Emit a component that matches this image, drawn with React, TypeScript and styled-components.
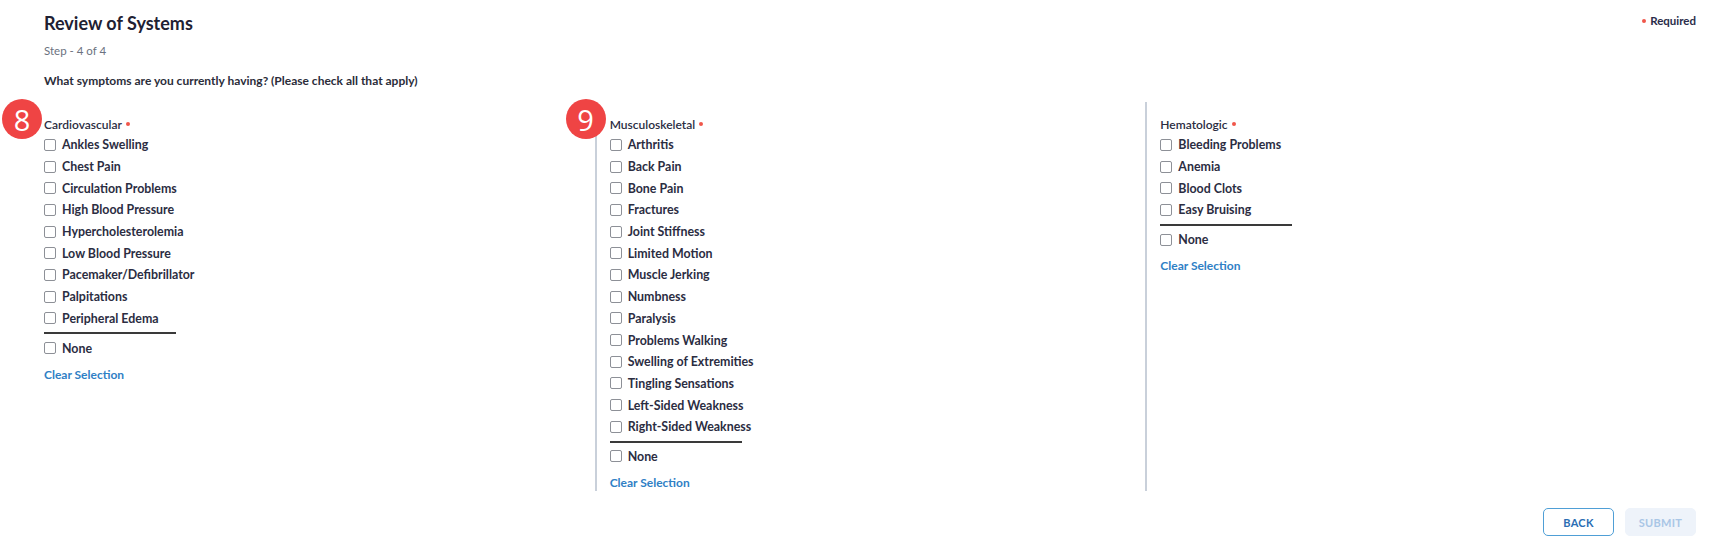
import styled, { createGlobalStyle } from 'styled-components'

const GlobalStyle = createGlobalStyle`
  body {
    margin: 0;
    background: #ffffff;
    font-family: Lato, "Open Sans", sans-serif;
  }
`

const sections = [
  {
    title: 'Cardiovascular',
    badge: '8',
    items: [
      'Ankles Swelling',
      'Chest Pain',
      'Circulation Problems',
      'High Blood Pressure',
      'Hypercholesterolemia',
      'Low Blood Pressure',
      'Pacemaker/Defibrillator',
      'Palpitations',
      'Peripheral Edema',
    ],
  },
  {
    title: 'Musculoskeletal',
    badge: '9',
    items: [
      'Arthritis',
      'Back Pain',
      'Bone Pain',
      'Fractures',
      'Joint Stiffness',
      'Limited Motion',
      'Muscle Jerking',
      'Numbness',
      'Paralysis',
      'Problems Walking',
      'Swelling of Extremities',
      'Tingling Sensations',
      'Left-Sided Weakness',
      'Right-Sided Weakness',
    ],
  },
  {
    title: 'Hematologic',
    items: ['Bleeding Problems', 'Anemia', 'Blood Clots', 'Easy Bruising'],
  },
]

const Page = styled.div`
  width: 1712px;
  height: 550px;
  box-sizing: border-box;
  padding: 12px 16px 0 44px;
  display: flex;
  flex-direction: column;
  color: #2b2d42;
`

const HeaderRow = styled.div`
  display: flex;
  justify-content: space-between;
  align-items: flex-start;
`

const Title = styled.h1`
  margin: 0;
  font-size: 18px;
  line-height: 22px;
  font-weight: 700;
  color: #1f2133;
`

const Required = styled.div`
  display: flex;
  align-items: center;
  gap: 4px;
  margin-top: 2px;
  font-size: 11.5px;
  font-weight: 700;
  color: #2b2d4a;
`

const Dot = styled.span`
  display: inline-block;
  width: 4px;
  height: 4px;
  border-radius: 50%;
  background: #f0564a;
`

const Step = styled.div`
  margin-top: 9px;
  font-size: 11.5px;
  line-height: 16px;
  color: #6b7280;
`

const Question = styled.div`
  margin-top: 14px;
  font-size: 12px;
  line-height: 16px;
  font-weight: 700;
  color: #2b2d3a;
`

const Columns = styled.div`
  margin-top: 13px;
  display: grid;
  grid-template-columns: repeat(3, 1fr);
  align-items: stretch;
`

const Column = styled.div<{ $divided?: boolean }>`
  position: relative;
  padding: 12px 0 0 ${({ $divided }) => ($divided ? '13px' : '0')};
  border-left: ${({ $divided }) => ($divided ? '2px solid #c9d0da' : 'none')};
  box-sizing: border-box;
`

const Badge = styled.div<{ $left: number }>`
  position: absolute;
  top: -3px;
  left: ${({ $left }) => $left}px;
  width: 40px;
  height: 40px;
  border-radius: 50%;
  background: #ef4444;
  color: #ffffff;
  display: flex;
  align-items: center;
  justify-content: center;
  font-family: "Open Sans", sans-serif;
  font-size: 29px;
  font-weight: 500;
  line-height: 1;
`

const SectionLabel = styled.div`
  display: flex;
  align-items: center;
  gap: 4px;
  height: 20px;
  font-size: 12px;
  font-weight: 600;
  color: #2b2d42;
`

const CheckRow = styled.label`
  display: flex;
  align-items: center;
  gap: 6px;
  height: 21.7px;
  font-size: 12.4px;
  font-weight: 700;
  color: #2b2d42;
`

const Box = styled.span`
  width: 10px;
  height: 10px;
  border: 1.5px solid #8d9097;
  border-radius: 2px;
  background: #ffffff;
  flex-shrink: 0;
`

const Rule = styled.div`
  width: 132px;
  height: 2px;
  background: #3a3a3a;
  margin: 3px 0 3px;
`

const ClearLink = styled.a`
  display: block;
  margin-top: 8px;
  font-size: 12px;
  line-height: 16px;
  font-weight: 700;
  color: #2f80c5;
  cursor: pointer;
`

const Footer = styled.div`
  display: flex;
  justify-content: flex-end;
  gap: 11px;
  margin-top: 17px;
`

const Button = styled.button<{ $primary?: boolean }>`
  width: 71px;
  height: 28px;
  border-radius: 5px;
  font-family: Lato, sans-serif;
  font-size: 11px;
  font-weight: 700;
  letter-spacing: 0.3px;
  border: ${({ $primary }) => ($primary ? '1px solid #eef3fa' : '1.5px solid #4f9fd6')};
  background: ${({ $primary }) => ($primary ? '#eef3fa' : '#ffffff')};
  color: ${({ $primary }) => ($primary ? '#a9c6e6' : '#2a6db3')};
`

const Check = ({ label }: { label: string }) => (
  <CheckRow>
    <Box />
    {label}
  </CheckRow>
)

export default function App() {
  return (
    <>
      <GlobalStyle />
      <Page>
        <HeaderRow>
          <Title>Review of Systems</Title>
          <Required>
            <Dot />
            Required
          </Required>
        </HeaderRow>
        <Step>Step - 4 of 4</Step>
        <Question>What symptoms are you currently having? (Please check all that apply)</Question>
        <Columns>
          {sections.map((s, i) => (
            <Column key={s.title} $divided={i > 0}>
              {s.badge && <Badge $left={i === 0 ? -42 : -31}>{s.badge}</Badge>}
              <SectionLabel>
                {s.title}
                <Dot />
              </SectionLabel>
              {s.items.map((item) => (
                <Check key={item} label={item} />
              ))}
              <Rule />
              <Check label="None" />
              <ClearLink>Clear Selection</ClearLink>
            </Column>
          ))}
        </Columns>
        <Footer>
          <Button>BACK</Button>
          <Button $primary>SUBMIT</Button>
        </Footer>
      </Page>
    </>
  )
}
